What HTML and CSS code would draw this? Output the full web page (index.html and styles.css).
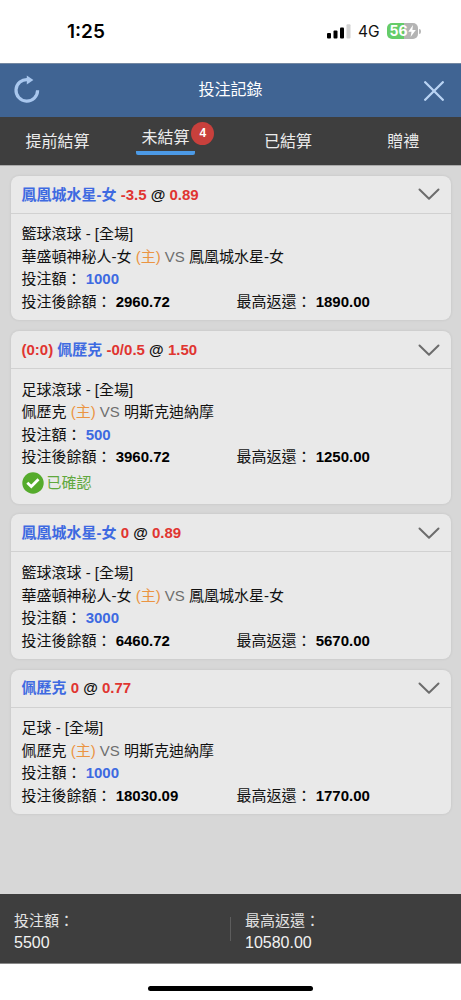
FILE: index.html
```html
<!DOCTYPE html>
<html lang="zh-Hant">
<head>
<meta charset="utf-8">
<meta name="viewport" content="width=device-width, initial-scale=1">
<title>投注記錄</title>
<link rel="stylesheet" href="styles.css">
</head>
<body>
<div class="app">
  <div class="status-bar">
    <span class="clock">1:25</span>
    <div class="status-right">
      <svg class="signal" width="24" height="15" viewBox="0 0 24 15"><rect x="0" y="9" width="4" height="5.5" rx="1"/><rect x="6.5" y="6.5" width="4" height="8" rx="1"/><rect x="13" y="3.5" width="4" height="11" rx="1"/><rect x="19.5" y="0.3" width="4" height="14.2" rx="1" fill="#d2d2d2"/></svg>
      <span class="network">4G</span>
      <div class="battery"><span>56</span><svg width="8" height="12" viewBox="0 0 8 12"><path d="M5 0 0.3 6.8H3.5L2.6 12 7.8 4.9H4.4Z" fill="#fff"/></svg></div>
      <span class="battery-cap"></span>
    </div>
  </div>

  <header class="header">
    <svg class="refresh" width="26" height="28" viewBox="0 0 26 28"><path d="M14 4.6A10.8 10.8 0 1 0 23.6 15.3" fill="none" stroke="#a9c7ee" stroke-width="3.2"/><path d="M12.8 0.6 19.4 5 12.8 9.4Z" fill="#a9c7ee"/></svg>
    <h1>投注記錄</h1>
    <svg class="close" width="20" height="20" viewBox="0 0 20 20"><path d="M1.2 1.2 18.8 18.8M18.8 1.2 1.2 18.8" stroke="#b9d3f3" stroke-width="2.3" stroke-linecap="round"/></svg>
  </header>

  <nav class="tabs">
    <div class="tab">提前結算</div>
    <div class="tab tab-active"><span class="tab-label">未結算<span class="badge">4</span></span></div>
    <div class="tab">已結算</div>
    <div class="tab">贈禮</div>
  </nav>

  <main class="list">
    <section class="card">
      <div class="card-head"><div class="pick"><b class="team">鳳凰城水星-女</b> <b class="odds">-3.5</b> <b>@</b> <b class="odds">0.89</b></div><svg class="chevron" width="22" height="13" viewBox="0 0 22 13"><path d="M1.5 1.5 11 10.7 20.5 1.5"/></svg></div>
      <div class="card-body">
        <div>籃球滾球 - [全場]</div>
        <div>華盛頓神秘人-女 <span class="home">(主)</span> <span class="vs">VS</span> 鳳凰城水星-女</div>
        <div>投注額： <b class="stake">1000</b></div>
        <div class="totals"><div>投注後餘額： <b>2960.72</b></div><div>最高返還： <b>1890.00</b></div></div>
      </div>
    </section>

    <section class="card">
      <div class="card-head"><div class="pick"><b class="odds">(0:0)</b> <b class="team">佩歷克</b> <b class="odds">-0/0.5</b> <b>@</b> <b class="odds">1.50</b></div><svg class="chevron" width="22" height="13" viewBox="0 0 22 13"><path d="M1.5 1.5 11 10.7 20.5 1.5"/></svg></div>
      <div class="card-body">
        <div>足球滾球 - [全場]</div>
        <div>佩歷克 <span class="home">(主)</span> <span class="vs">VS</span> 明斯克迪納摩</div>
        <div>投注額： <b class="stake">500</b></div>
        <div class="totals"><div>投注後餘額： <b>3960.72</b></div><div>最高返還： <b>1250.00</b></div></div>
        <div class="confirmed"><svg width="22" height="22" viewBox="0 0 22 22"><circle cx="11" cy="11" r="10.7" fill="#55ab2c"/><path d="M5.3 10.8 9.3 14.6 16.5 7.3" fill="none" stroke="#fff" stroke-width="2.8"/></svg><span>已確認</span></div>
      </div>
    </section>

    <section class="card">
      <div class="card-head"><div class="pick"><b class="team">鳳凰城水星-女</b> <b class="odds">0</b> <b>@</b> <b class="odds">0.89</b></div><svg class="chevron" width="22" height="13" viewBox="0 0 22 13"><path d="M1.5 1.5 11 10.7 20.5 1.5"/></svg></div>
      <div class="card-body">
        <div>籃球滾球 - [全場]</div>
        <div>華盛頓神秘人-女 <span class="home">(主)</span> <span class="vs">VS</span> 鳳凰城水星-女</div>
        <div>投注額： <b class="stake">3000</b></div>
        <div class="totals"><div>投注後餘額： <b>6460.72</b></div><div>最高返還： <b>5670.00</b></div></div>
      </div>
    </section>

    <section class="card">
      <div class="card-head"><div class="pick"><b class="team">佩歷克</b> <b class="odds">0</b> <b>@</b> <b class="odds">0.77</b></div><svg class="chevron" width="22" height="13" viewBox="0 0 22 13"><path d="M1.5 1.5 11 10.7 20.5 1.5"/></svg></div>
      <div class="card-body">
        <div>足球 - [全場]</div>
        <div>佩歷克 <span class="home">(主)</span> <span class="vs">VS</span> 明斯克迪納摩</div>
        <div>投注額： <b class="stake">1000</b></div>
        <div class="totals"><div>投注後餘額： <b>18030.09</b></div><div>最高返還： <b>1770.00</b></div></div>
      </div>
    </section>
  </main>

  <footer class="summary">
    <div class="sum"><div>投注額：</div><div class="amount">5500</div></div>
    <span class="divider"></span>
    <div class="sum"><div>最高返還：</div><div class="amount">10580.00</div></div>
  </footer>
  <div class="home-area"><span class="home-bar"></span></div>
</div>
</body>
</html>
```
FILE: styles.css
```css
* { box-sizing: border-box; }
body {
  margin: 0;
  background: #fff;
  color: #111;
  font: 15px/22.5px "Liberation Sans", "Noto Sans CJK TC", sans-serif;
}
.app { width: 461px; height: 1000px; display: flex; flex-direction: column; overflow: hidden; }
svg { display: block; flex: none; }

.status-bar { height: 63px; flex: none; display: flex; justify-content: space-between; padding: 0 40px 0 67px; }
.clock { margin-top: 20px; font: 600 19px/24px Inter, sans-serif; color: #000; }
.status-right { display: flex; align-items: center; height: 63px; }
.signal { margin-top: -1px; }
.network { margin-left: 7px; font: 400 15.5px/20px Inter, sans-serif; color: #111; width: 22px; white-space: nowrap; }
.battery {
  display: flex; align-items: center; justify-content: center;
  margin: -1px 0 0 7px; width: 31px; height: 16px; border-radius: 5px;
  background: linear-gradient(90deg, #65cc69 56%, #b4b4b4 56%);
  color: #fff; font: 700 14px/16px Inter, sans-serif;
}
.battery-cap { width: 2px; height: 5px; margin-left: 1px; background: #b9b9b9; border-radius: 0 2px 2px 0; }

.header {
  height: 54px; flex: none; display: flex; align-items: center; justify-content: space-between;
  padding: 0 17px 0 14px; background: #406493; border-top: 1px solid #7488a2;
}
.refresh { margin-top: -4px; }
.header h1 { margin: 0 3px 0 0; font-size: 16px; font-weight: 400; color: #fff; }

.tabs { height: 48px; flex: none; display: grid; grid-template-columns: repeat(4, 1fr); background: #3e3e3e; color: #ececec; font-size: 16px; }
.tab { display: flex; align-items: center; justify-content: center; padding-top: 2px; }
.tab-active { padding: 0 14px 0 0; align-items: flex-start; }
.tab-label {
  position: relative; height: 38px; width: 59px; padding: 0 6px 0 5px;
  border-bottom: 4px solid #4c9ae6; border-radius: 2px; line-height: 41px; white-space: nowrap;
}
.badge {
  position: absolute; left: 55px; top: 5px; width: 23px; height: 23px; border-radius: 50%;
  background: #c8403c; color: #fff; font: 700 12px/23px "Liberation Sans", sans-serif; text-align: center;
}

.list { flex: 1; display: flex; flex-direction: column; gap: 10.6px; padding: 9.8px 10.5px 0; background: #d7d7d7; border-top: 1px solid #aaa; }
.card { flex: none; background: #e9e9e9; border-radius: 8px; box-shadow: 0 0 3px rgba(0, 0, 0, .1); padding-bottom: 7px; }
.card-head { height: 38px; display: flex; align-items: center; justify-content: space-between; padding: 1px 11px 0; border-bottom: 1px solid #d1d1d1; }
.pick { color: #111; }
.team, .stake { color: #3e6ae1; }
.odds { color: #e03531; }
.chevron path { fill: none; stroke: #6c6c6c; stroke-width: 2; stroke-linecap: round; stroke-linejoin: round; }
.card-body { padding: 9.7px 11px 0; }
.totals { display: grid; grid-template-columns: 215px 1fr; color: #111; }
.totals b { color: #000; }
.home { color: #eb9442; }
.vs { color: #6e6e6e; }
.confirmed { display: flex; align-items: center; gap: 3px; height: 28px; color: #60a83d; }

.summary { height: 70px; flex: none; display: flex; align-items: center; background: #3e3e3e; color: #e3e3e3; border-bottom: 1px solid #888; }
.sum { width: 230px; padding: 7px 0 0 14px; }
.amount { font-size: 16px; line-height: 22px; color: #f2f2f2; }
.divider { width: 1px; height: 24px; background: #5d5d5d; }
.home-area { height: 36px; flex: none; display: flex; justify-content: center; padding-top: 22px; }
.home-bar { width: 165px; height: 5px; border-radius: 3px; background: #000; }
```
